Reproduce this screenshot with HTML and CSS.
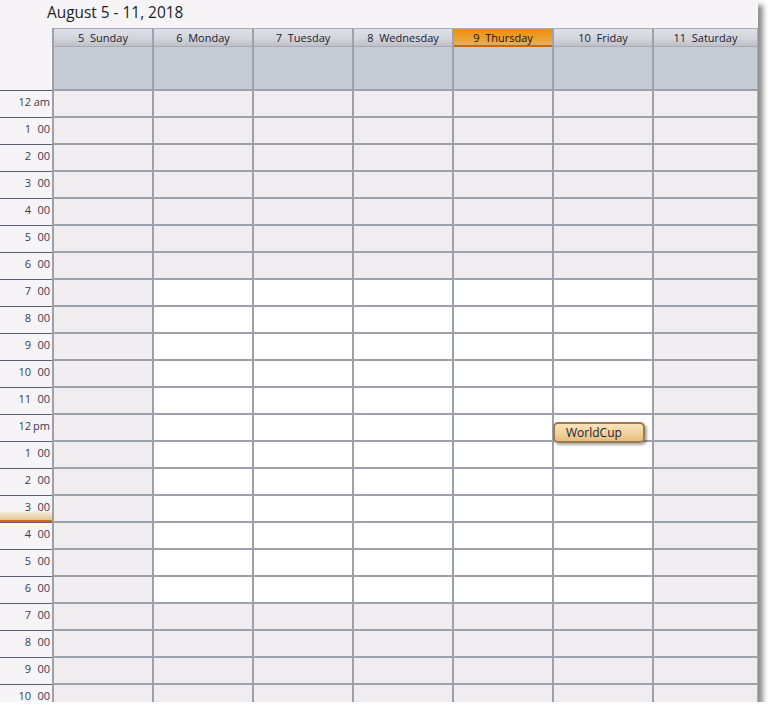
FILE: index.html
```html
<!DOCTYPE html>
<html>
<head>
<meta charset="utf-8">
<link rel="stylesheet" href="styles.css">
</head>
<body>
<div class="win">
  <div class="title">August 5 - 11, 2018</div>
  <div class="head">
    <div class="corner"></div>
    <div class="day"><div class="lbl">5  Sunday</div><div class="allday"></div></div>
    <div class="day"><div class="lbl">6  Monday</div><div class="allday"></div></div>
    <div class="day"><div class="lbl">7  Tuesday</div><div class="allday"></div></div>
    <div class="day"><div class="lbl">8  Wednesday</div><div class="allday"></div></div>
    <div class="day today"><div class="lbl">9  Thursday</div><div class="allday"></div></div>
    <div class="day"><div class="lbl">10  Friday</div><div class="allday"></div></div>
    <div class="day last"><div class="lbl">11  Saturday</div><div class="allday"></div></div>
  </div>
  <div class="body">
    <div class="row"><div class="t"><span class="h">12</span><span class="m">am</span></div><div class="c"></div><div class="c"></div><div class="c"></div><div class="c"></div><div class="c"></div><div class="c"></div><div class="c"></div></div>
    <div class="row"><div class="t"><span class="h">1</span><span class="m">00</span></div><div class="c"></div><div class="c"></div><div class="c"></div><div class="c"></div><div class="c"></div><div class="c"></div><div class="c"></div></div>
    <div class="row"><div class="t"><span class="h">2</span><span class="m">00</span></div><div class="c"></div><div class="c"></div><div class="c"></div><div class="c"></div><div class="c"></div><div class="c"></div><div class="c"></div></div>
    <div class="row"><div class="t"><span class="h">3</span><span class="m">00</span></div><div class="c"></div><div class="c"></div><div class="c"></div><div class="c"></div><div class="c"></div><div class="c"></div><div class="c"></div></div>
    <div class="row"><div class="t"><span class="h">4</span><span class="m">00</span></div><div class="c"></div><div class="c"></div><div class="c"></div><div class="c"></div><div class="c"></div><div class="c"></div><div class="c"></div></div>
    <div class="row"><div class="t"><span class="h">5</span><span class="m">00</span></div><div class="c"></div><div class="c"></div><div class="c"></div><div class="c"></div><div class="c"></div><div class="c"></div><div class="c"></div></div>
    <div class="row"><div class="t"><span class="h">6</span><span class="m">00</span></div><div class="c"></div><div class="c"></div><div class="c"></div><div class="c"></div><div class="c"></div><div class="c"></div><div class="c"></div></div>
    <div class="row"><div class="t"><span class="h">7</span><span class="m">00</span></div><div class="c"></div><div class="c w"></div><div class="c w"></div><div class="c w"></div><div class="c w"></div><div class="c w"></div><div class="c"></div></div>
    <div class="row"><div class="t"><span class="h">8</span><span class="m">00</span></div><div class="c"></div><div class="c w"></div><div class="c w"></div><div class="c w"></div><div class="c w"></div><div class="c w"></div><div class="c"></div></div>
    <div class="row"><div class="t"><span class="h">9</span><span class="m">00</span></div><div class="c"></div><div class="c w"></div><div class="c w"></div><div class="c w"></div><div class="c w"></div><div class="c w"></div><div class="c"></div></div>
    <div class="row"><div class="t"><span class="h">10</span><span class="m">00</span></div><div class="c"></div><div class="c w"></div><div class="c w"></div><div class="c w"></div><div class="c w"></div><div class="c w"></div><div class="c"></div></div>
    <div class="row"><div class="t"><span class="h">11</span><span class="m">00</span></div><div class="c"></div><div class="c w"></div><div class="c w"></div><div class="c w"></div><div class="c w"></div><div class="c w"></div><div class="c"></div></div>
    <div class="row"><div class="t"><span class="h">12</span><span class="m">pm</span></div><div class="c"></div><div class="c w"></div><div class="c w"></div><div class="c w"></div><div class="c w"></div><div class="c w ev-cell"><div class="event">WorldCup</div></div><div class="c"></div></div>
    <div class="row"><div class="t"><span class="h">1</span><span class="m">00</span></div><div class="c"></div><div class="c w"></div><div class="c w"></div><div class="c w"></div><div class="c w"></div><div class="c w"></div><div class="c"></div></div>
    <div class="row"><div class="t"><span class="h">2</span><span class="m">00</span></div><div class="c"></div><div class="c w"></div><div class="c w"></div><div class="c w"></div><div class="c w"></div><div class="c w"></div><div class="c"></div></div>
    <div class="row"><div class="t now-cell"><span class="h">3</span><span class="m">00</span><div class="now"></div></div><div class="c"></div><div class="c w"></div><div class="c w"></div><div class="c w"></div><div class="c w"></div><div class="c w"></div><div class="c"></div></div>
    <div class="row"><div class="t"><span class="h">4</span><span class="m">00</span></div><div class="c"></div><div class="c w"></div><div class="c w"></div><div class="c w"></div><div class="c w"></div><div class="c w"></div><div class="c"></div></div>
    <div class="row"><div class="t"><span class="h">5</span><span class="m">00</span></div><div class="c"></div><div class="c w"></div><div class="c w"></div><div class="c w"></div><div class="c w"></div><div class="c w"></div><div class="c"></div></div>
    <div class="row"><div class="t"><span class="h">6</span><span class="m">00</span></div><div class="c"></div><div class="c w"></div><div class="c w"></div><div class="c w"></div><div class="c w"></div><div class="c w"></div><div class="c"></div></div>
    <div class="row"><div class="t"><span class="h">7</span><span class="m">00</span></div><div class="c"></div><div class="c"></div><div class="c"></div><div class="c"></div><div class="c"></div><div class="c"></div><div class="c"></div></div>
    <div class="row"><div class="t"><span class="h">8</span><span class="m">00</span></div><div class="c"></div><div class="c"></div><div class="c"></div><div class="c"></div><div class="c"></div><div class="c"></div><div class="c"></div></div>
    <div class="row"><div class="t"><span class="h">9</span><span class="m">00</span></div><div class="c"></div><div class="c"></div><div class="c"></div><div class="c"></div><div class="c"></div><div class="c"></div><div class="c"></div></div>
    <div class="row"><div class="t"><span class="h">10</span><span class="m">00</span></div><div class="c"></div><div class="c"></div><div class="c"></div><div class="c"></div><div class="c"></div><div class="c"></div><div class="c"></div></div>
  </div>
</div>
</body>
</html>
```
FILE: styles.css
```css
* { box-sizing: border-box; }
html, body { margin: 0; padding: 0; background: #ffffff; }
body { font-family: "Open Sans", "Noto Sans", sans-serif; color: #1e2430; }

.win {
  width: 758px;
  height: 702px;
  overflow: hidden;
  background: #f7f4f8;
  box-shadow: 5px 5px 5px rgba(0, 0, 0, 0.45);
  display: flex;
  flex-direction: column;
}

.title {
  height: 28px;
  padding-left: 47px;
  padding-top: 2px;
  font-size: 15.4px;
  line-height: 22px;
  color: #1c1c28;
  flex: none;
}

.head {
  flex: none;
  display: grid;
  grid-template-columns: 52px repeat(6, 100px) 1fr;
  height: 63px;
}

.corner { border-bottom: 1px solid #5a6070; }

.day {
  display: flex;
  flex-direction: column;
  border-left: 2px solid #9da1ab;
  border-top: 1px solid #a9adb6;
  border-bottom: 2px solid #9da1ab;
}
.day.last { border-right: 1px solid #a9adb6; }

.lbl {
  height: 18px;
  flex: none;
  font-size: 11px;
  line-height: 18px;
  text-align: center;
  white-space: pre;
  color: #1a2030;
  background: linear-gradient(#dde0e7 0%, #d3d5dc 55%, #bfc0c5 100%);
  border-bottom: 1px solid #a6aab3;
}
.today .lbl {
  background: linear-gradient(#f08c08 0%, #ec9e2c 50%, #e0b062 100%);
  border-bottom: 2px solid #c8680a;
  line-height: 17px;
  color: #201408;
}

.allday { flex: 1; background: #c7cbd5; }

.body { flex: none; }

.row {
  display: grid;
  grid-template-columns: 52px repeat(6, 100px) 1fr;
  height: 27px;
}

.t {
  display: flex;
  font-size: 11px;
  line-height: 14px;
  padding-top: 4px;
  color: #3a3a52;
  border-bottom: 1px solid #5a6070;
  background: #f7f4f8;
}
.t .h { width: 31px; text-align: right; }
.t .m { width: 19px; text-align: right; }

.c {
  background: #f0ecf0;
  border-left: 2px solid #9da1ab;
  border-bottom: 2px solid #9da1ab;
}
.c:last-child { border-right: 1px solid #a9adb6; }
.c.w { background: #ffffff; }

.now-cell, .ev-cell { position: relative; }

.now {
  position: absolute;
  left: 0;
  right: 0;
  top: 15px;
  height: 11px;
  background: linear-gradient(rgba(240, 225, 200, 0) 0%, #f0e2c8 30%, #e2c697 100%);
  border-bottom: 2px solid #d06a12;
}

.event {
  position: absolute;
  left: -1px;
  top: 7px;
  width: 92px;
  height: 21px;
  z-index: 2;
  padding-left: 11px;
  font-size: 12px;
  line-height: 17px;
  color: #1a2240;
  border: 2px solid #9b7b4c;
  border-radius: 5px;
  background: linear-gradient(#f9e3bd 0%, #f0cf98 60%, #e6bd80 100%);
  box-shadow: 2px 2px 3px rgba(0, 0, 0, 0.35);
}
```
